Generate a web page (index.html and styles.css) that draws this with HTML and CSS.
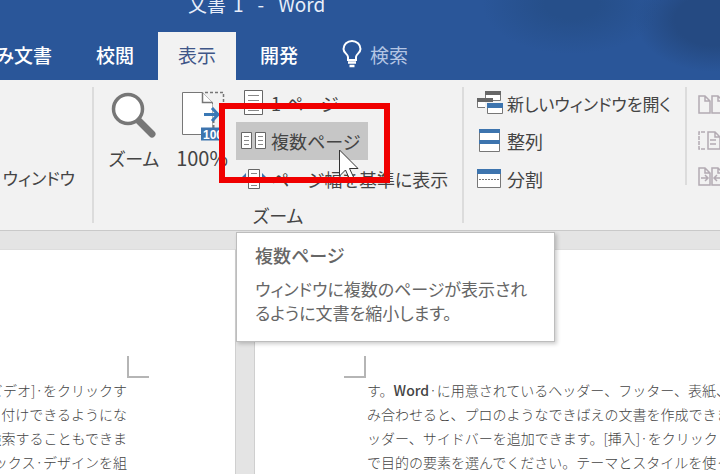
FILE: index.html
```
<!DOCTYPE html>
<html lang="ja">
<head>
  <meta charset="UTF-8">
  <title>文書 1 - Word</title>
  <meta name="viewport" content="width=device-width, initial-scale=1">
  <link rel="stylesheet" href="styles.css">
</head>
<body>
  <header class="header">
    <div class="title"><span>文書</span><span>1</span><span>-</span><span>Word</span></div>
    <nav class="tabs">
      <button class="tab tab-first" type="button">み文書</button>
      <button class="tab" type="button">校閲</button>
      <button class="tab active" type="button">表示</button>
      <button class="tab" type="button">開発</button>
      <button class="tab search" type="button">
        <svg width="20" height="28" viewBox="0 0 20 28" fill="none" stroke="#fff" stroke-width="2">
          <path d="M6 20v-3C6 14 1.500 13 1.500 9a8.500 8 0 0 1 17 0c0 4-4.500 5-4.500 8v3z"/>
          <path d="M6 22.500h8M7.500 26h5" stroke-width="2.500"/>
        </svg>
        検索
      </button>
    </nav>
  </header>

  <div class="ribbon">
    <section class="group group-prev">
      <button class="text-button compact" type="button">ウィンドウ</button>
    </section>

    <section class="group group-zoom">
      <div class="group-body">
        <button class="big" type="button">
          <svg width="46" height="52" viewBox="0 0 46 52">
            <path d="M28 30l13 13" stroke="#777" stroke-width="7" stroke-linecap="round"/>
            <circle cx="17" cy="18" r="14.500" fill="#fff" stroke="#777" stroke-width="3.500"/>
          </svg>
          <span>ズーム</span>
        </button>
        <button class="big" type="button">
          <svg width="46" height="52" viewBox="0 0 46 52">
            <path d="M3.500 1.500h20l10 10v32h-30z" fill="#fff" stroke="#777"/>
            <path d="M23.500 1.500v10h10" fill="#fff" stroke="#777" stroke-width="1.500"/>
            <path d="M26 1.500h18.500V44" fill="none" stroke="#777" stroke-width="1.500" stroke-dasharray="3 2"/>
            <path d="M34.500 13v24" stroke="#f2f2f2" stroke-width="2"/>
            <path d="M34.500 29v8" stroke="#777" stroke-width="2" stroke-dasharray="3 2"/>
            <path d="M25 23.500h13M33 17l6 6.500-6 6.500" fill="none" stroke="#3a78b5" stroke-width="3"/>
            <path d="M22 36.500h24v13H22z" fill="#3d74ae"/>
            <text class="badge" x="24" y="48">100</text>
          </svg>
          <span class="percent">100%</span>
        </button>
        <div class="list">
          <button class="item" type="button">
            <svg width="28" height="28" viewBox="0 0 28 28">
              <path d="M4.500 1.500h18v24h-18z" fill="#fff" stroke="#666"/>
              <path d="M8 6.500h11M8 11.500h11M8 16.500h11M8 21.500h11" stroke="#888"/>
            </svg>
            1 ページ
          </button>
          <button class="item hover" type="button">
            <svg width="28" height="28" viewBox="0 0 28 28">
              <path d="M1.500 5.500h10v16h-10zM15.500 5.500h10v16h-10z" fill="#fff" stroke="#666"/>
              <path d="M4 9.500h5M4 13.500h5M4 17.500h5M18 9.500h5M18 13.500h5M18 17.500h5" stroke="#888"/>
            </svg>
            複数ページ
          </button>
          <button class="item" type="button">
            <svg width="28" height="28" viewBox="0 0 28 28">
              <path d="M8.500 4.500h11v19h-11z" fill="#fff" stroke="#666"/>
              <path d="M11 8.500h6M11 12.500h6M11 16.500h6M11 20.500h6" stroke="#888"/>
              <path d="M6 8v10l-5-5zM22 8v10l5-5z" fill="#3d74ae"/>
            </svg>
            ページ幅を基準に表示
          </button>
        </div>
      </div>
      <div class="group-name">ズーム</div>
    </section>

    <section class="group group-window">
      <div class="list">
        <button class="item compact" type="button">
          <svg width="28" height="28" viewBox="0 0 28 28">
            <path d="M9.500 2.500h15v9h-15z" fill="#fff" stroke="#777"/>
            <path d="M9 2h16v4H9z" fill="#666"/>
            <path d="M1.500 9.500h15v9h-15z" fill="#fff" stroke="#777"/>
            <path d="M1 9h16v4H1z" fill="#666"/>
            <path d="M9 13h18v13H9z" fill="#f2f2f2"/>
            <path d="M11.500 15.500h15v9h-15z" fill="#fff" stroke="#777"/>
            <path d="M11 14h16v5H11z" fill="#3d74ae"/>
          </svg>
          新しいウィンドウを開く
        </button>
        <button class="item" type="button">
          <svg width="28" height="28" viewBox="0 0 28 28">
            <path d="M3.500 2.500h20v22h-20z" fill="#fff" stroke="#777"/>
            <path d="M3 2h21v4H3zM3 13h21v4H3z" fill="#3d74ae"/>
          </svg>
          整列
        </button>
        <button class="item" type="button">
          <svg width="28" height="28" viewBox="0 0 28 28">
            <path d="M1.500 5.500h23v17h-23z" fill="#fff" stroke="#777"/>
            <path d="M1 4h24v5H1z" fill="#3d74ae"/>
            <path d="M3 14.500h20" stroke="#777" stroke-dasharray="2 1"/>
          </svg>
          分割
        </button>
      </div>
    </section>

    <section class="group group-side">
      <button class="side" type="button" aria-label="並べて比較">
        <svg width="32" height="24" viewBox="0 0 32 24" fill="none" stroke="#b3abb3" stroke-width="1.500">
          <path d="M2 3h6l5 5v12H2zM8 3v5h5M15 3h6l5 5v12H15zM21 3v5h5"/>
        </svg>
      </button>
      <button class="side" type="button" aria-label="同時にスクロール">
        <svg width="32" height="24" viewBox="0 0 32 24" fill="none" stroke="#b3abb3" stroke-width="1.500">
          <path d="M8 3H2v17h6" stroke-dasharray="4 1"/>
          <path d="M11 3h7l5 5v12H11zM18 3v5h5M13 11h6M13 15h6"/>
        </svg>
      </button>
      <button class="side" type="button" aria-label="ウィンドウの位置を元に戻す">
        <svg width="32" height="24" viewBox="0 0 32 24" fill="none" stroke="#b3abb3" stroke-width="1.500">
          <path d="M2 3h6l5 5v12H2zM8 3v5h5M15 3h6l5 5v12H15zM21 3v5h5"/>
          <path d="M4 13h6M8 10l3 3-3 3M24 13h-6M20 10l-3 3 3 3"/>
        </svg>
      </button>
    </section>
  </div>

  <main class="workspace">
    <article class="page page-left">
      <div class="corner corner-left"></div>
      <p>[ビデオ]·をクリックす</p>
      <p>付けできるようにな</p>
      <p>検索することもできま</p>
      <p>ックス·デザインを組</p>
    </article>
    <article class="page page-right">
      <div class="corner corner-right"></div>
      <p>す。<b>Word</b>·に用意されているヘッダー、フッター、表紙、</p>
      <p>み合わせると、プロのようなできばえの文書を作成できます</p>
      <p>ッダー、サイドバーを追加できます。[挿入]·をクリックし</p>
      <p>で目的の要素を選んでください。テーマとスタイルを使って</p>
    </article>
  </main>

  <div class="tooltip" role="tooltip">
    <h2>複数ページ</h2>
    <p class="compact">ウィンドウに複数のページが表示され<br>るように文書を縮小します。</p>
  </div>
  <svg class="cursor" width="22" height="32" viewBox="0 0 22 32">
    <path d="M1.500 1v26l6-6 4 9 4-2-4-8.500h8.500z" fill="#fff" stroke="#333"/>
  </svg>
  <div class="marker"></div>
</body>
</html>
```
FILE: styles.css
```
* {
  margin: 0;
  padding: 0;
  box-sizing: border-box;
}

html, body {
  height: 100%;
  overflow: hidden;
}

body {
  display: flex;
  flex-direction: column;
  background: #e4e4e4;
  color: #444;
  font-family: "Noto Sans CJK JP", sans-serif;
  font-size: 18px;
  font-feature-settings: "palt";
}

button {
  border: none;
  background: none;
  color: inherit;
  font: inherit;
  font-feature-settings: inherit;
  white-space: nowrap;
}

svg {
  display: block;
  flex: none;
}

.compact {
  font-size: 17px;
}

/* タイトルバーとタブ */
.header {
  flex: none;
  background:
    radial-gradient(ellipse 90px 50px at 572px 4px, #264f8a 30%, transparent),
    radial-gradient(ellipse 80px 52px at 715px 20px, #254a82 50%, transparent),
    #2a5699;
  color: #fff;
}

.title {
  display: flex;
  gap: 14px;
  height: 32px;
  padding-left: 188px;
  color: #e8eefa;
  font-size: 19px;
  line-height: 8px;
}

.title span:nth-child(2) {
  margin-left: -7px;
}

.tabs {
  display: flex;
  gap: 4px;
  height: 48px;
}

.tab {
  display: flex;
  align-items: center;
  padding: 0 20px 4px;
  font-size: 19px;
  font-weight: 500;
}

.tab-first {
  justify-content: flex-end;
  width: 72px;
  overflow: hidden;
}

.tab.active {
  background: #f2f2f2;
  color: #3f5688;
  font-weight: 400;
}

.tab.search {
  gap: 8px;
  color: #b4c5e3;
  font-weight: 400;
}

/* リボン */
.ribbon {
  display: flex;
  flex: none;
  height: 151px;
  border-bottom: 1px solid #c9c9c9;
  background: #f2f2f2;
  overflow: hidden;
}

.group {
  flex: none;
  margin: 7px 0;
  border-right: 2px solid #dcdcdc;
}

.group-prev {
  display: flex;
  align-items: center;
  justify-content: flex-end;
  width: 94px;
  padding: 44px 17px 0 0;
}

.group-zoom {
  display: flex;
  flex-direction: column;
  width: 370px;
}

.group-body {
  display: flex;
  height: 112px;
}

.big {
  display: flex;
  flex-direction: column;
  align-items: center;
  gap: 2px;
  width: 62px;
  padding-top: 4px;
  line-height: 26px;
}

.big:first-child {
  margin: 0 6px 0 9px;
}

.percent {
  font-size: 20px;
}

.badge {
  fill: #fff;
  font-family: "Liberation Sans", sans-serif;
  font-size: 12px;
  font-weight: bold;
}

.list {
  display: flex;
  flex-direction: column;
  align-items: flex-start;
  width: max-content;
  margin-top: -3px;
}

.item {
  display: flex;
  align-items: center;
  gap: 3px;
  height: 38px;
  padding: 0 8px 0 4px;
}

.item.hover {
  background: #c6c6c6;
}

.group-zoom .list {
  margin-left: 3px;
}

.group-name {
  line-height: 34px;
  text-align: center;
}

.group-window {
  width: 223px;
  height: 98px;
  padding-left: 8px;
}

.group-window .list {
  margin-top: -3px;
}

.group-side {
  border: none;
  padding-left: 10px;
}

.side {
  display: flex;
  align-items: center;
  height: 36px;
}

/* 文書 */
.workspace {
  display: flex;
  flex: 1;
  gap: 18px;
  padding-top: 18px;
}

.page {
  background: #fff;
  border: 1px solid #cfcfcf;
  border-top-color: #ddd;
  overflow: hidden;
  padding-top: 106px;
  font-size: 14px;
  font-weight: 300;
  font-feature-settings: normal;
  line-height: 24px;
  white-space: nowrap;
}

.page-left {
  display: flex;
  flex: none;
  flex-direction: column;
  align-items: flex-end;
  width: 236px;
  padding-right: 108px;
  border-left: none;
}

.page-right {
  flex: 1;
  min-width: 0;
  padding-left: 112px;
  border-right: none;
}

.page b {
  font-weight: 500;
}

.corner {
  width: 22px;
  height: 22px;
  border-bottom: 2px solid #b5b5b5;
}

.corner-left {
  margin-right: -22px;
  border-left: 2px solid #b5b5b5;
}

.corner-right {
  margin-left: -23px;
  border-right: 2px solid #b5b5b5;
}

/* 前面に重なるもの */
.tooltip {
  position: absolute;
  top: 232px;
  left: 236px;
  width: 319px;
  padding: 10px 18px 16px;
  border: 1px solid #bdbdbd;
  background: #fff;
  box-shadow: 2px 2px 4px rgba(0, 0, 0, 0.2);
  color: #666;
  line-height: 24px;
}

.tooltip h2 {
  margin-bottom: 10px;
  font-size: 18px;
  font-weight: 500;
}

.cursor {
  position: absolute;
  top: 149px;
  left: 338px;
}

.marker {
  position: absolute;
  top: 103px;
  left: 219px;
  width: 171px;
  height: 80px;
  border: 6px solid #f00000;
  pointer-events: none;
}
```
